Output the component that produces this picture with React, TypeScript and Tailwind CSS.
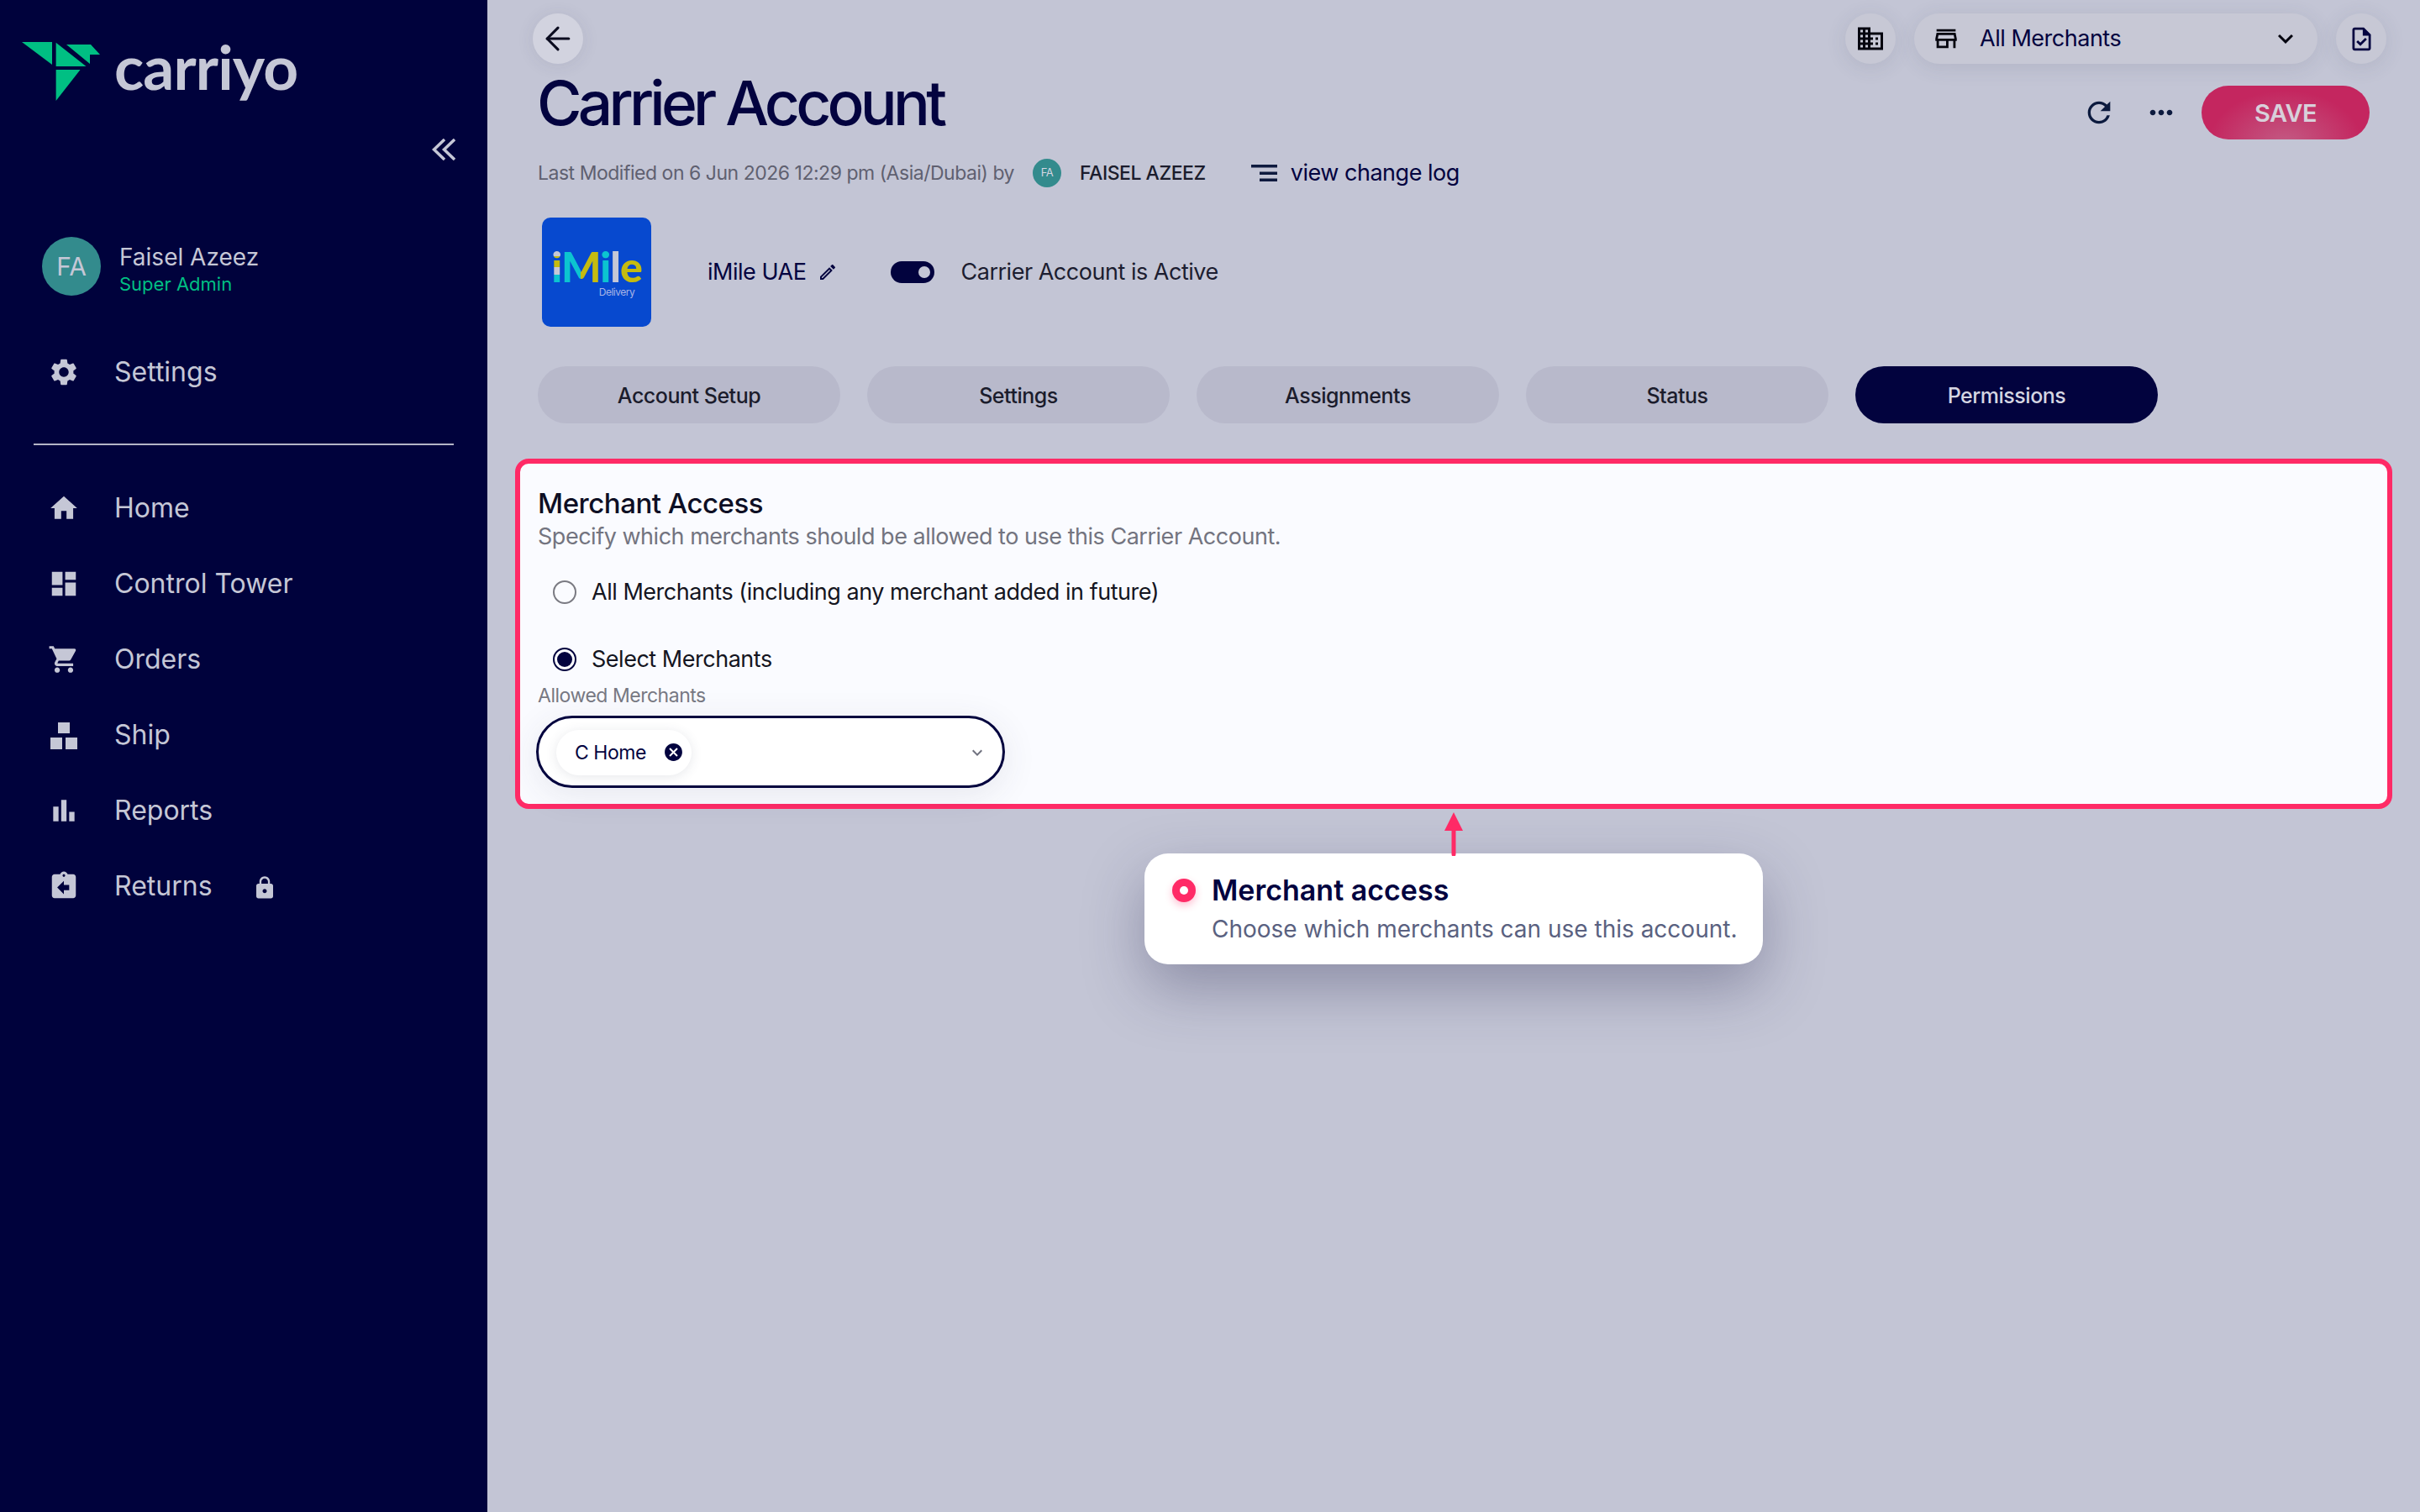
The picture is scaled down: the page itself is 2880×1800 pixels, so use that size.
import type { ReactNode } from "react";
import { ArrowLeft } from "lucide-react";
import {
  MdAssignmentReturn,
  MdBarChart,
  MdCancel,
  MdDashboard,
  MdDomain,
  MdExpandMore,
  MdHome,
  MdLock,
  MdMoreHoriz,
  MdOutlineEdit,
  MdOutlineStore,
  MdOutlineTask,
  MdRefresh,
  MdSettings,
  MdShoppingCart,
} from "react-icons/md";

const ShipIcon = () => (
  <svg viewBox="0 0 38 38" className="h-[38px] w-[38px] fill-current">
    <rect x="12" y="4" width="14" height="13" />
    <rect x="3" y="22" width="14" height="14" />
    <rect x="21" y="22" width="14" height="14" />
  </svg>
);

const LogoMark = () => (
  <svg viewBox="26 50 93 70" className="h-[70px] w-[93px] fill-[#00bf83]">
    <polygon points="26,50 62,50 62,77" />
    <polygon points="66.6,50.7 102.5,79 66.6,79" />
    <polygon points="79,53 108,53 119,65 107,65 107,76" />
    <polygon points="66.6,83 95.5,83 66.6,120" />
  </svg>
);

const nav = [
  { label: "Home", icon: <MdHome size={38} /> },
  { label: "Control Tower", icon: <MdDashboard size={38} /> },
  { label: "Orders", icon: <MdShoppingCart size={38} /> },
  { label: "Ship", icon: <ShipIcon /> },
  { label: "Reports", icon: <MdBarChart size={38} /> },
  { label: "Returns", icon: <MdAssignmentReturn size={38} />, locked: true },
];

const NavItem = ({ label, icon, locked }: { label: string; icon: ReactNode; locked?: boolean }) => (
  <div className="flex h-[90px] items-center pl-[57px]">
    <span className="flex w-[38px] justify-center">{icon}</span>
    <span className="ml-[41px] text-[32px]">{label}</span>
    {locked && (
      <span className="ml-[47px] mt-[4px]">
        <MdLock size={30} />
      </span>
    )}
  </div>
);

const Sidebar = () => (
  <aside className="flex h-full w-[580px] shrink-0 flex-col bg-[#00023c] text-[#c5c7d6]">
    <div className="flex items-start pl-[26px] pt-[50px]">
      <LogoMark />
      <span className="ml-[17px] mt-[-15px] font-['Lato',sans-serif] text-[73px] font-bold leading-[88px] tracking-[-0.012em]">
        carriyo
      </span>
    </div>
    <div className="mt-[42px] flex justify-end pr-[38px]">
      <svg viewBox="0 0 28 26" className="h-[26px] w-[28px] fill-none stroke-current stroke-[3.5]">
        <path d="M15 1 L2.5 13 L15 25" />
        <path d="M27 1 L14.5 13 L27 25" />
      </svg>
    </div>
    <div className="mt-[91px] flex items-center pl-[50px]">
      <div className="flex h-[70px] w-[70px] items-center justify-center rounded-full bg-[#338b8d] text-[30px]">
        FA
      </div>
      <div className="ml-[22px] mt-[6px] flex flex-col">
        <span className="text-[28px] leading-[36px]">Faisel Azeez</span>
        <span className="text-[22px] leading-[28px] text-[#00bf83]">Super Admin</span>
      </div>
    </div>
    <div className="mt-[46px]">
      <NavItem label="Settings" icon={<MdSettings size={38} />} />
    </div>
    <div className="mx-[40px] mt-[40px] h-[2px] bg-[#b4b5c6]" />
    <nav className="mt-[30px]">
      {nav.map((item) => (
        <NavItem key={item.label} {...item} />
      ))}
    </nav>
  </aside>
);

const tabs = ["Account Setup", "Settings", "Assignments", "Status", "Permissions"];

const RoundButton = ({ children }: { children: ReactNode }) => (
  <button className="flex h-[60px] w-[60px] items-center justify-center rounded-full bg-[#c7c8d5] shadow-[0_4px_24px_rgba(60,62,90,0.12)]">
    {children}
  </button>
);

const Tooltip = () => (
  <div className="absolute left-[782px] top-[1016px] h-[132px] w-[736px] rounded-[28px] bg-white pl-[33px] pt-[25px] tracking-normal shadow-[0_28px_70px_rgba(40,40,80,0.35)]">
    <svg viewBox="0 0 22 52" className="absolute left-[357px] top-[-49px] h-[52px] w-[22px]">
      <path d="M11 0 L22 22 H0 Z" fill="#ff2a66" />
      <path d="M11 16 V50" stroke="#ff2a66" strokeWidth="5" strokeLinecap="round" />
    </svg>
    <div className="flex items-start">
      <div className="mt-[5px] flex h-[28px] w-[28px] items-center justify-center rounded-full bg-[#ff2a66] shadow-[0_4px_10px_rgba(255,42,102,0.3)]">
        <div className="h-[10px] w-[10px] rounded-full bg-white" />
      </div>
      <div className="ml-[19px] flex flex-col">
        <span className="text-[34px] font-semibold leading-[38px] text-[#03033f]">Merchant access</span>
        <span className="mt-[9px] text-[28px] leading-[36px] text-[#5a6180]">
          Choose which merchants can use this account.
        </span>
      </div>
    </div>
  </div>
);

const MerchantCard = () => (
  <section className="ml-[33px] mr-[33px] mt-[42px] h-[417px] rounded-[16px] border-[6px] border-[#ff2a66] bg-[#fafbff] pl-[21px] pt-[27px]">
    <h2 className="text-[33px] font-medium leading-[40px] text-[#0e0f24]">Merchant Access</h2>
    <p className="text-[27px] leading-[40px] text-[#73747f]">
      Specify which merchants should be allowed to use this Carrier Account.
    </p>
    <div className="ml-[18px] mt-[26px] flex h-[40px] items-center">
      <span className="h-[28px] w-[28px] rounded-full border-2 border-[#7a7a82]" />
      <span className="ml-[18px] text-[27px] text-[#14151f]">
        All Merchants (including any merchant added in future)
      </span>
    </div>
    <div className="ml-[18px] mt-[40px] flex h-[40px] items-center">
      <span className="flex h-[28px] w-[28px] items-center justify-center rounded-full border-2 border-[#02033e]">
        <span className="h-[18px] w-[18px] rounded-full bg-[#02033e]" />
      </span>
      <span className="ml-[18px] text-[27px] text-[#14151f]">Select Merchants</span>
    </div>
    <div className="mt-[9px] text-[23px] leading-[28px] text-[#777882]">Allowed Merchants</div>
    <div className="ml-[-2px] mt-[10px] flex h-[86px] w-[558px] items-center rounded-full border-[3px] border-[#02033e] bg-white pl-[21px] pr-[20px] shadow-[0_8px_40px_rgba(60,62,90,0.1)]">
      <div className="mt-[1px] flex h-[54px] w-[161px] items-center rounded-full bg-white pl-[22px] shadow-[0_2px_14px_rgba(60,62,90,0.12)]">
        <span className="pt-[1px] text-[23px] text-[#03033f]">C Home</span>
        <MdCancel size={25} className="ml-[20px] text-[#02033e]" />
      </div>
      <MdExpandMore size={24} className="ml-auto mr-[-2px] mt-[2px] text-[#70727f]" />
    </div>
  </section>
);

export default function App() {
  return (
    <div className="flex h-screen w-full overflow-hidden font-['Inter',sans-serif]">
      <Sidebar />
      <main className="relative min-w-0 flex-1 bg-[#c3c5d5] pt-[16px] tracking-[-0.03em]">
        <div className="flex items-center justify-between pl-[54px] pr-[40px]">
          <button className="flex h-[60px] w-[60px] items-center justify-center rounded-full bg-[#d2d3df] shadow-[0_2px_20px_rgba(60,62,90,0.1)]">
            <ArrowLeft size={44} strokeWidth={1.7} className="text-[#0a0b1e]" />
          </button>
          <div className="flex items-center gap-[22px]">
            <RoundButton>
              <MdDomain size={36} className="text-[#05050f]" />
            </RoundButton>
            <div className="flex h-[60px] w-[480px] items-center rounded-full bg-[#c7c8d5] pl-[21px] pr-[20px] shadow-[0_4px_24px_rgba(60,62,90,0.12)]">
              <MdOutlineStore size={34} className="text-[#05050f]" />
              <span className="ml-[23px] text-[27px] text-[#03033f]">All Merchants</span>
              <MdExpandMore size={36} className="ml-auto text-[#05050f]" />
            </div>
            <RoundButton>
              <MdOutlineTask size={33} className="text-[#03033f]" />
            </RoundButton>
          </div>
        </div>

        <div className="mt-[7px] flex items-start justify-between pl-[59px] pr-[60px]">
          <h1 className="text-[73px] font-medium leading-[80px] tracking-[-0.065em] text-[#03033f]">
            Carrier Account
          </h1>
          <div className="mt-[19px] flex items-center">
            <MdRefresh size={40} className="text-[#0c1a3e]" />
            <MdMoreHoriz size={40} className="ml-[34px] text-[#0c1a3e]" />
            <button className="ml-[28px] h-[64px] w-[200px] rounded-full bg-[radial-gradient(ellipse_at_50%_110%,#c35b84,#c4265f_65%)] pt-[2px] text-[29px] font-semibold text-[#d8d0da]">
              SAVE
            </button>
          </div>
        </div>

        <div className="mt-[23px] flex h-[34px] items-center pl-[60px]">
          <span className="text-[23px] text-[#5f6070]">Last Modified on 6 Jun 2026 12:29 pm (Asia/Dubai) by</span>
          <span className="ml-[22px] flex h-[34px] w-[34px] items-center justify-center rounded-full bg-[#338b8d] text-[13px] text-[#d5d6e2]">
            FA
          </span>
          <span className="ml-[22px] text-[23px] font-medium text-[#1b1c2c]">FAISEL AZEEZ</span>
          <svg viewBox="0 0 31 20" className="ml-[54px] h-[20px] w-[31px] fill-[#0e1a3e]">
            <rect x="0" y="0" width="31" height="3.5" />
            <rect x="10" y="8.5" width="21" height="3.5" />
            <rect x="10" y="16.5" width="21" height="3.5" />
          </svg>
          <span className="ml-[16px] text-[27px] text-[#03033f]">view change log</span>
        </div>

        <div className="ml-[65px] mt-[36px] flex items-center">
          <div className="flex h-[130px] w-[130px] flex-col items-center justify-center rounded-[10px] bg-[#0749cf]">
            <div className="font-['Lato',sans-serif] text-[50px] font-black leading-[48px] tracking-[-0.02em]">
              <span className="bg-[linear-gradient(180deg,#c5c7d6_30%,#c5bb0f_30%,#c5bb0f_52%,#c5c7d6_52%,#c5c7d6_66%,#0cc4d0_66%)] bg-clip-text text-transparent">
                i
              </span>
              <span className="bg-[linear-gradient(90deg,#0cc4d0_50%,#c5bb0f_50%)] bg-clip-text text-transparent">
                M
              </span>
              <span className="text-[#0cc4d0]">i</span>
              <span className="text-[#c5c7d6]">l</span>
              <span className="text-[#c5bb0f]">e</span>
            </div>
            <div className="ml-[48px] text-[12px] leading-[14px] text-[#a8b4e6]">Delivery</div>
          </div>
          <span className="ml-[67px] text-[27px] text-[#03033f]">iMile UAE</span>
          <MdOutlineEdit size={24} className="ml-[14px] text-[#03033f]" />
          <div className="ml-[63px] flex h-[26px] w-[52px] items-center justify-end rounded-full bg-[#02033e] pr-[5px]">
            <div className="h-[14px] w-[14px] rounded-full bg-[#c5c7d6]" />
          </div>
          <span className="ml-[31px] text-[27px] text-[#1c1d30]">Carrier Account is Active</span>
        </div>

        <div className="ml-[60px] mt-[47px] flex gap-[32px]">
          {tabs.map((tab) => (
            <div
              key={tab}
              className={
                tab === "Permissions"
                  ? "flex h-[68px] w-[360px] items-center justify-center rounded-full bg-[#02033e] pt-[3px] text-[25px] font-medium text-[#d5d6e2]"
                  : "flex h-[68px] w-[360px] items-center justify-center rounded-full bg-[#b8b9cb] pt-[3px] text-[25px] font-medium text-[#1b1c2c]"
              }
            >
              {tab}
            </div>
          ))}
        </div>

        <MerchantCard />
        <Tooltip />
      </main>
    </div>
  );
}
